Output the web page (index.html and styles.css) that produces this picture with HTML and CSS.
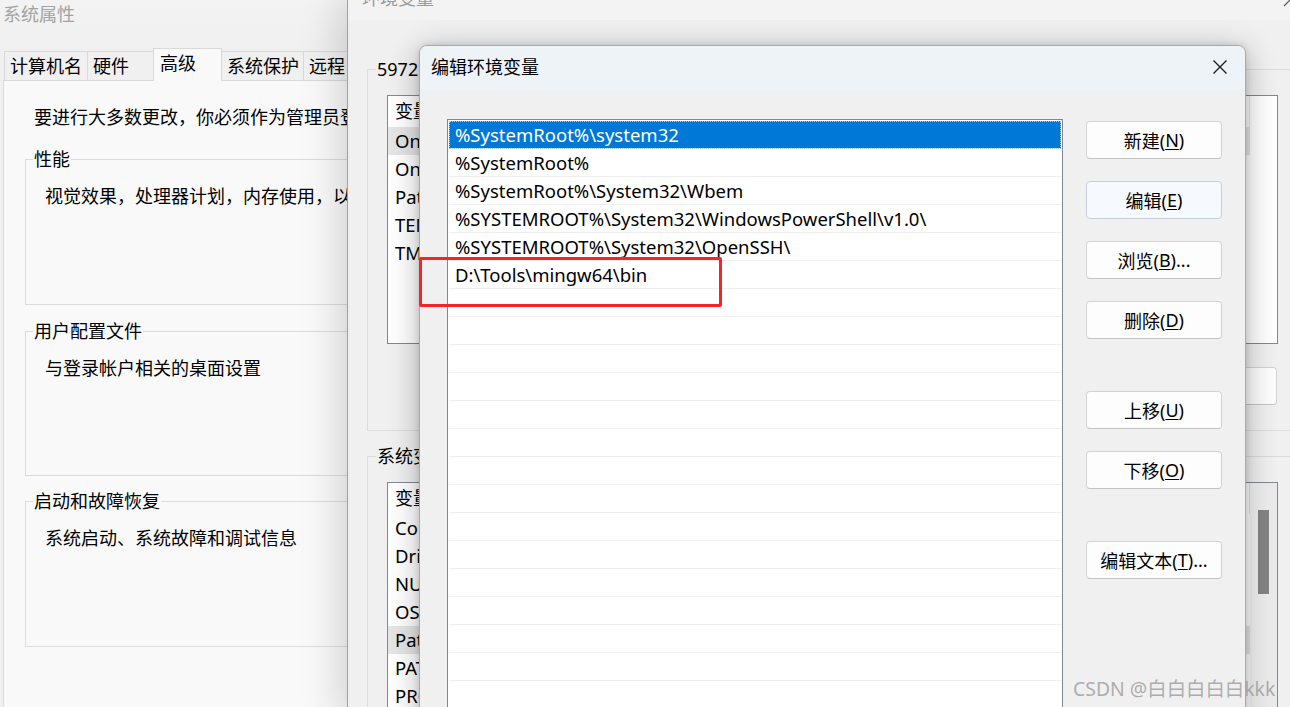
FILE: index.html
```html
<!DOCTYPE html>
<html lang="zh-CN">
<head>
<meta charset="utf-8">
<title>编辑环境变量</title>
<link rel="stylesheet" href="styles.css">
</head>
<body>
<div class="desk">

  <section class="win win-sys">
    <header class="sys-title">系统属性</header>
    <nav class="tabs">
      <span class="tab t1">计算机名</span>
      <span class="tab t2">硬件</span>
      <span class="tab t3 active">高级</span>
      <span class="tab t4">系统保护</span>
      <span class="tab t5">远程</span>
    </nav>
    <div class="panel">
      <p class="intro">要进行大多数更改，你必须作为管理员登录。</p>
      <div class="group g1">
        <span class="group-title">性能</span>
        <p class="group-text">视觉效果，处理器计划，内存使用，以及虚拟内存</p>
      </div>
      <div class="group g2">
        <span class="group-title">用户配置文件</span>
        <p class="group-text">与登录帐户相关的桌面设置</p>
      </div>
      <div class="group g3">
        <span class="group-title">启动和故障恢复</span>
        <p class="group-text">系统启动、系统故障和调试信息</p>
      </div>
    </div>
  </section>

  <section class="win win-env">
    <header class="env-title">
      <span class="env-title-text">环境变量</span>
      <svg class="env-close" width="20" height="20" viewBox="0 0 20 20"><path d="M3 3 L17 17 M17 3 L3 17" stroke="#555" stroke-width="1.2" fill="none"/></svg>
    </header>
    <div class="egroup eg-user">
      <span class="egroup-title">5972 的用户变量(U)</span>
      <div class="vlist vl-user">
        <div class="vhead"><span class="vcol c-name">变量</span><span class="vcol c-val">值</span></div>
        <div class="vrow hl"><span class="c-name">OneDrive</span></div>
        <div class="vrow"><span class="c-name">OneDriveConsumer</span></div>
        <div class="vrow"><span class="c-name">Path</span></div>
        <div class="vrow"><span class="c-name">TEMP</span></div>
        <div class="vrow"><span class="c-name">TMP</span></div>
      </div>
      <div class="ebuttons">
        <span class="btn ebtn">新建(<u>N</u>)...</span>
        <span class="btn ebtn">编辑(<u>E</u>)...</span>
        <span class="btn ebtn">删除(<u>D</u>)</span>
      </div>
    </div>
    <div class="egroup eg-sys">
      <span class="egroup-title">系统变量(S)</span>
      <div class="vlist vl-sys">
        <div class="vhead"><span class="vcol c-name">变量</span><span class="vcol c-val">值</span></div>
        <div class="vrow"><span class="c-name">ComSpec</span></div>
        <div class="vrow"><span class="c-name">DriverData</span></div>
        <div class="vrow"><span class="c-name">NUMBER_OF_PROCESSORS</span></div>
        <div class="vrow"><span class="c-name">OS</span></div>
        <div class="vrow hl"><span class="c-name">Path</span></div>
        <div class="vrow"><span class="c-name">PATHEXT</span></div>
        <div class="vrow"><span class="c-name">PROCESSOR_ARCHITECTURE</span></div>
        <div class="vscroll"><div class="vthumb"></div></div>
      </div>
    </div>
  </section>

  <section class="win win-edit">
    <header class="edit-title">
      <span>编辑环境变量</span>
      <svg class="edit-close" width="16" height="16" viewBox="0 0 16 16"><path d="M1.5 1.5 L14.5 14.5 M14.5 1.5 L1.5 14.5" stroke="#1a1a1a" stroke-width="1.3" fill="none"/></svg>
    </header>
    <div class="edit-body">
      <div class="plist">
        <div class="prow sel">%SystemRoot%\system32</div>
        <div class="prow">%SystemRoot%</div>
        <div class="prow">%SystemRoot%\System32\Wbem</div>
        <div class="prow">%SYSTEMROOT%\System32\WindowsPowerShell\v1.0\</div>
        <div class="prow">%SYSTEMROOT%\System32\OpenSSH\</div>
        <div class="prow">D:\Tools\mingw64\bin</div>
        <div class="prow"></div>
        <div class="prow"></div>
        <div class="prow"></div>
        <div class="prow"></div>
        <div class="prow"></div>
        <div class="prow"></div>
        <div class="prow"></div>
        <div class="prow"></div>
        <div class="prow"></div>
        <div class="prow"></div>
        <div class="prow"></div>
        <div class="prow"></div>
        <div class="prow"></div>
        <div class="prow"></div>
        <div class="prow"></div>
      </div>
      <div class="pbuttons">
        <span class="btn pbtn">新建(<u>N</u>)</span>
        <span class="btn pbtn focus">编辑(<u>E</u>)</span>
        <span class="btn pbtn">浏览(<u>B</u>)...</span>
        <span class="btn pbtn">删除(<u>D</u>)</span>
        <span class="btn pbtn gap">上移(<u>U</u>)</span>
        <span class="btn pbtn">下移(<u>O</u>)</span>
        <span class="btn pbtn gap">编辑文本(<u>T</u>)...</span>
      </div>
    </div>
  </section>

  <div class="mark-red"></div>
  <div class="watermark">CSDN @白白白白白kkk</div>
</div>
</body>
</html>
```

FILE: styles.css
```css
* { box-sizing: border-box; }
html, body { margin: 0; padding: 0; }
body {
  width: 1290px;
  height: 707px;
  overflow: hidden;
  background: #f0f0f0;
  font-family: "Noto Sans", "Noto Sans CJK SC", sans-serif;
  font-size: 18px;
  color: #000;
}
p { margin: 0; }
u { text-decoration: underline; text-underline-offset: 2px; text-decoration-thickness: 1px; }

.desk { position: relative; width: 1290px; height: 707px; overflow: hidden; }
.win { position: absolute; }

/* ---------- window 1: 系统属性 ---------- */
.win-sys {
  left: 0; top: 0;
  width: 347px; height: 720px;
  overflow: hidden;
  background: #f0f0f0;
  z-index: 1;
}
.sys-title {
  height: 48px;
  line-height: 28px;
  padding-left: 3px;
  color: #a3a3a3;
  background: linear-gradient(#f3f3f3, #f0f0f0);
}
.tabs {
  position: relative;
  z-index: 2;
  display: flex;
  align-items: flex-end;
  height: 32px;
  padding-left: 4px;
}
.tab {
  height: 29px;
  line-height: 28px;
  padding-left: 5px;
  border: 1px solid #d9d9d9;
  border-bottom: none;
  background: #f0f0f0;
  white-space: nowrap;
  flex: none;
}
.tab + .tab { margin-left: -1px; }
.t1 { width: 84px; }
.t2 { width: 67px; }
.t3 { width: 69px; }
.t4 { width: 83px; }
.t5 { width: 60px; }
.tab.active {
  height: 33px;
  margin-bottom: -1px;
  line-height: 29px;
  background: #f9f9f9;
  padding-left: 6px;
  position: relative;
  z-index: 1;
}
.panel {
  margin-left: 3px;
  width: 600px;
  height: 640px;
  border: 1px solid #d9d9d9;
  background: #f9f9f9;
}
.intro {
  margin-top: 23px;
  padding-left: 30px;
  line-height: 26px;
  white-space: nowrap;
}
.group {
  margin-left: 21px;
  width: 560px;
  height: 146px;
  border: 1px solid #dcdcdc;
}
.g1 { margin-top: 29px; }
.g2 { margin-top: 26px; height: 145px; }
.g3 { margin-top: 25px; }
.group-title {
  display: block;
  width: fit-content;
  margin: -13px 0 0 7px;
  padding: 0 1px;
  line-height: 24px;
  background: #f9f9f9;
}
.group-text {
  margin: 12px 0 0 19px;
  line-height: 26px;
  white-space: nowrap;
}

/* ---------- window 2: 环境变量 ---------- */
.win-env {
  left: 347px; top: 0;
  width: 990px; height: 720px;
  background: #f0f0f0;
  border-left: 1px solid #9f9f9f;
  box-shadow: -6px 0 38px rgba(0,0,0,0.17);
  z-index: 2;
}
.env-title {
  position: relative;
  height: 20px;
  overflow: hidden;
  background: #f3f3f3;
}
.env-title-text {
  display: block;
  margin: -14px 0 0 14px;
  line-height: 24px;
  color: #9a9a9a;
}
.env-close { position: absolute; left: 933px; top: -11px; }
.egroup {
  margin-left: 19px;
  width: 960px;
  border: 1px solid #dcdcdc;
  padding-left: 19px;
}
.eg-user { margin-top: 49px; height: 362px; }
.eg-sys { margin-top: 25px; height: 400px; }
.egroup-title {
  display: block;
  width: fit-content;
  margin: -13px 0 0 -11px;
  padding: 0 1px;
  line-height: 24px;
  background: #f0f0f0;
  white-space: nowrap;
}
.vlist {
  position: relative;
  width: 891px;
  margin-top: 14px;
  border: 1px solid #828790;
  background: #fff;
  overflow: hidden;
}
.vl-user { height: 249px; }
.vl-sys { height: 300px; }
.vhead {
  display: flex;
  height: 31px;
  line-height: 30px;
}
.vcol { border-right: 1px solid #e5e5e5; padding-left: 7px; white-space: nowrap; }
.vhead .c-name { width: 300px; }
.vhead .c-val { width: 562px; }
.vrow {
  width: 862px;
  height: 28px;
  line-height: 28px;
  padding-left: 7px;
  white-space: nowrap;
  font-size: 18.5px;
}
.vrow.hl { background: #e5e5e5; }
.vscroll {
  position: absolute;
  right: 0; top: 0;
  width: 27px; height: 100%;
  background: linear-gradient(90deg, #f4f4f4, #e9e9e9);
}
.vthumb {
  position: absolute;
  left: 8px; top: 27px;
  width: 11px; height: 84px;
  background: #858585;
}
.ebuttons {
  display: flex;
  justify-content: flex-end;
  gap: 16px;
  width: 890px;
  margin-top: 23px;
}
.btn {
  display: flex;
  align-items: center;
  justify-content: center;
  height: 38px;
  border: 1px solid #d3d3d3;
  border-bottom-color: #c4c4c4;
  border-radius: 4px;
  background: #fdfdfd;
  white-space: nowrap;
}
.ebtn { width: 136px; }

/* ---------- window 3: 编辑环境变量 ---------- */
.win-edit {
  left: 419px; top: 45px;
  width: 827px; height: 700px;
  background: #f0f0f0;
  border: 1px solid #a9a9a9;
  border-radius: 8px 8px 0 0;
  box-shadow: 0 6px 30px rgba(0,0,0,0.3), 0 0 6px rgba(0,0,0,0.12);
  z-index: 3;
  overflow: hidden;
}
.edit-title {
  display: flex;
  align-items: center;
  justify-content: space-between;
  height: 43px;
  padding: 0 17px 0 11px;
  background: #eef3f8;
}
.edit-title span { line-height: 24px; margin-top: -1px; }
.edit-close { margin-top: -1px; }
.edit-body {
  display: flex;
  align-items: flex-start;
  padding: 30px 0 0 27px;
}
.plist {
  width: 616px;
  height: 640px;
  border: 1px solid #828790;
  background: #fff;
  padding: 1px 1px 0 1px;
  overflow: hidden;
  flex: none;
}
.prow {
  height: 28px;
  line-height: 27px;
  padding-left: 6px;
  border-bottom: 1px solid #efefef;
  white-space: nowrap;
  font-size: 18.5px;
}
.prow.sel {
  background: #0078d7;
  color: #fff;
  outline: 1px dotted #a8d0f0;
  outline-offset: -1px;
}
.pbuttons {
  display: flex;
  flex-direction: column;
  gap: 22px;
  margin: 2px 0 0 23px;
}
.pbtn { width: 136px; }
.pbtn.gap { margin-top: 30px; }
.pbtn.focus { background: #f6f9fd; border-color: #c6ceda; }

/* ---------- overlays ---------- */
.mark-red {
  position: absolute;
  left: 419px; top: 257px;
  width: 303px; height: 50px;
  border: 3px solid #f52525;
  border-radius: 2px;
  z-index: 5;
}
.watermark {
  position: absolute;
  left: 1073px; top: 677px;
  line-height: 24px;
  font-size: 19.4px;
  color: rgba(150,150,150,0.75);
  z-index: 5;
  white-space: nowrap;
}
```
